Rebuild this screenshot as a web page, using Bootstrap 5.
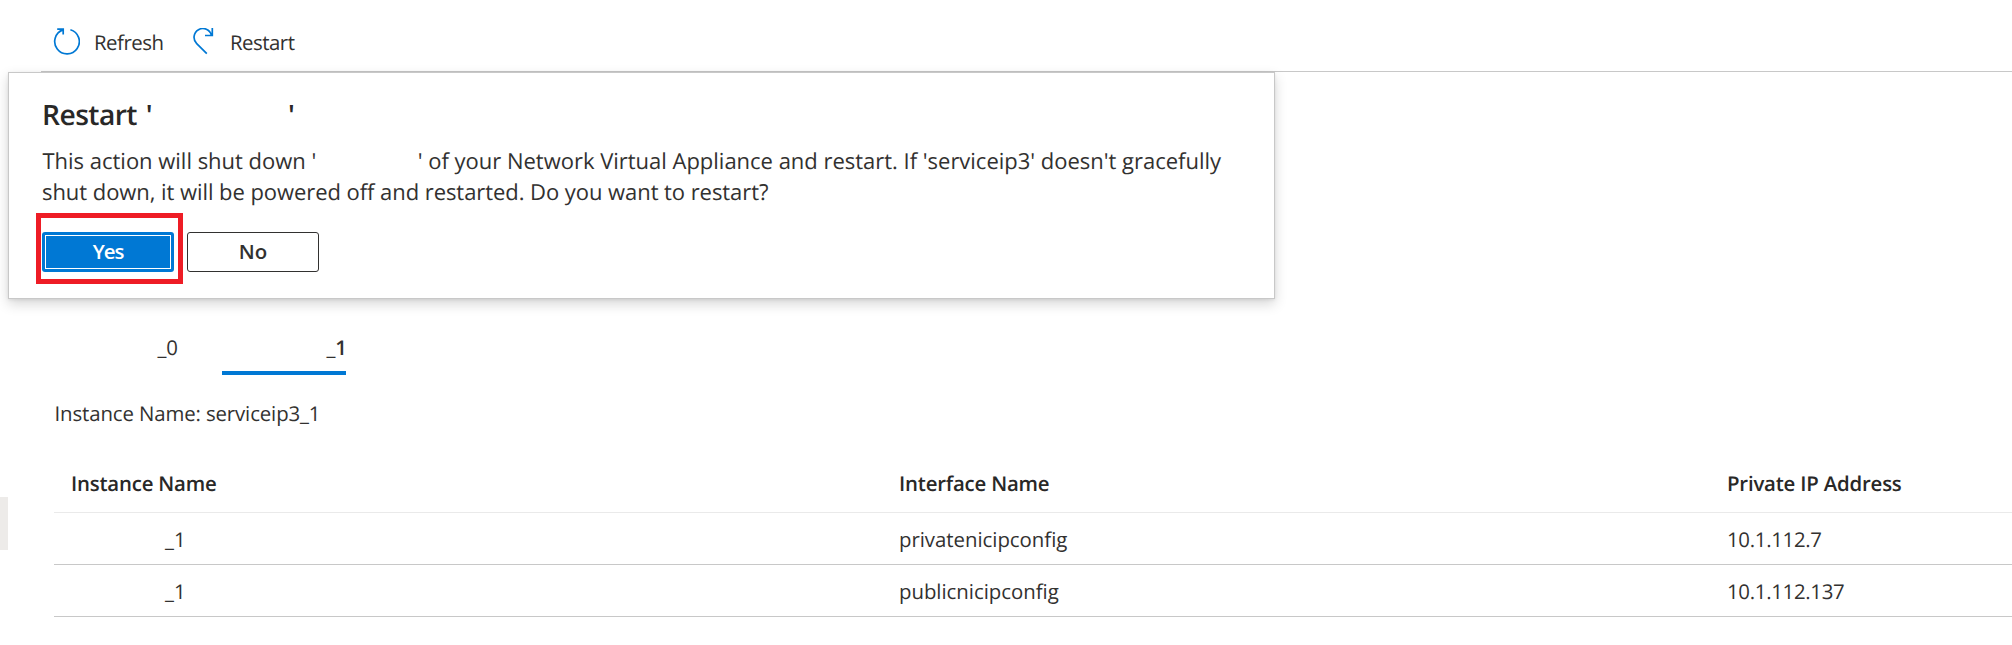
<!DOCTYPE html>
<html lang="en">
<head>
<meta charset="utf-8">
<meta name="viewport" content="width=device-width, initial-scale=1">
<title>Restart instance</title>
<link href="https://cdn.jsdelivr.net/npm/bootstrap@5.3.0/dist/css/bootstrap.min.css" rel="stylesheet">
<style>
  body { font-family: "Open Sans", "Noto Sans", sans-serif; font-size: 20.4px; line-height: 30px; color: #323130; background: #fff; height: 645px; overflow: hidden; letter-spacing: -.03px; text-rendering: geometricPrecision; }
  .page { height: 645px; }
  .toolbar { margin-left: 41px; height: 72px; padding: 27px 0 0 12px; border-bottom: 1px solid #c8c8c8; letter-spacing: -.5px; }
  .tool { height: 30px; color: inherit; }
  .tool svg { fill: none; stroke: #0078d4; stroke-width: 1.7; }
  .tool-refresh { width: 139px; }
  .tool-refresh span { margin-left: 14px; }
  .tool-restart span { margin-left: 16px; }

  /* confirmation callout lies over the page content */
  .confirm { left: 8px; top: 72px; width: 1267px; height: 227px; padding: 24px 33px 0; background: #fff; border: 1px solid #c8c8c8; box-shadow: 0 5px 12px rgba(0,0,0,.16), 0 1px 3px rgba(0,0,0,.08); z-index: 10; }
  .confirm h2 { font-size: 28.2px; line-height: 36px; font-weight: 600; letter-spacing: -.55px; word-spacing: 2px; margin: 0 0 13px; color: #292827; }
  .confirm p { font-size: 22px; line-height: 31px; letter-spacing: -.06px; margin: 0 0 24px; white-space: nowrap; }
  .first-line { letter-spacing: -.015px; margin-left: .5px; }
  .gap-title { display: inline-block; width: 136px; }
  .gap-name { display: inline-block; width: 101.5px; }
  .choices { gap: 13px; }
  .choice { width: 132px; height: 40px; padding: 0 0 2px; border-radius: 3px; font-size: 20.4px; line-height: 34px; font-weight: 600; letter-spacing: 0; border: 1px solid #323130; color: #323130; background: #fff; }
  .choice-yes { background: #0078d4; border: 0; color: #fff; letter-spacing: -1px; outline: 1px solid #fff; outline-offset: -4px; line-height: 36px; }
  .highlight { left: -6px; top: -19px; width: 147px; height: 71px; border: 5px solid #ee1c25; pointer-events: none; }

  .tabs { margin: 260px 0 0 54px; gap: 45px; height: 43px; }
  .tabs > div { text-align: right; height: 43px; }
  .tabs span { margin-right: -1px; }
  .tab-0 { width: 123px; }
  .tab-1 { width: 124px; border-bottom: 4px solid #0078d4; }
  .tab-1 b { font-weight: 600; }
  .instance { margin: 23px 0 0 54.5px; letter-spacing: -.12px; }

  .grid-list { margin: 40px 0 0 54px; width: 2484px; }
  .grid-line { display: grid; grid-template-columns: 828px 828px 828px; border-bottom: 1px solid #c8c8c8; height: 52px; padding-top: 11px; }
  .grid-line > div { padding-left: 17px; }
  .grid-head { height: 45px; padding-top: 0; font-weight: 600; letter-spacing: -.2px; border-color: #eaeaea; color: #292827; }
  .grid-line > .masked { padding-left: 111px; }
  .ip { letter-spacing: -.3px; }
  .rail { left: 0; top: 497px; width: 8px; height: 53px; background: #edebe9; }
</style>
</head>
<body class="position-relative">
<div class="position-absolute rail"></div>
<div class="page overflow-hidden">
  <nav class="toolbar d-flex align-items-start">
    <div class="tool tool-refresh d-flex align-items-center">
      <svg width="27" height="28" viewBox="0 0 27 28"><path d="M17.4 1.7A12.3 12.3 0 1 1 10 1.9M4.2 1.1H10.2V6.6"/></svg><span>Refresh</span>
    </div>
    <div class="tool tool-restart d-flex align-items-center">
      <svg width="22" height="28" viewBox="0 0 22 28"><path d="M14.8 25.6L4.7 15.6A8.8 8.8 0 1 1 19.4 7.2M20.3 0V7.5H13"/></svg><span>Restart</span>
    </div>
  </nav>

  <div class="tabs d-flex">
    <div class="tab-0"><span>_0</span></div>
    <div class="tab-1"><span>_<b>1</b></span></div>
  </div>
  <div class="instance">Instance Name: serviceip3_1</div>

  <div class="grid-list">
    <div class="grid-line grid-head"><div>Instance Name</div><div>Interface Name</div><div>Private IP Address</div></div>
    <div class="grid-line"><div class="masked">_1</div><div>privatenicipconfig</div><div class="ip">10.1.112.7</div></div>
    <div class="grid-line"><div class="masked">_1</div><div>publicnicipconfig</div><div class="ip">10.1.112.137</div></div>
  </div>
</div>

<section class="confirm position-absolute">
  <h2>Restart '<span class="gap-title"></span>'</h2>
  <p><span class="first-line">This action will shut down '<span class="gap-name"></span>' of your Network Virtual Appliance and restart. If 'serviceip3' doesn't gracefully</span><br>shut down, it will be powered off and restarted. Do you want to restart?</p>
  <div class="choices d-flex position-relative">
    <button class="btn choice choice-yes">Yes</button>
    <button class="btn choice">No</button>
    <div class="highlight position-absolute"></div>
  </div>
</section>
<script src="https://cdn.jsdelivr.net/npm/bootstrap@5.3.0/dist/js/bootstrap.bundle.min.js"></script>
</body>
</html>
